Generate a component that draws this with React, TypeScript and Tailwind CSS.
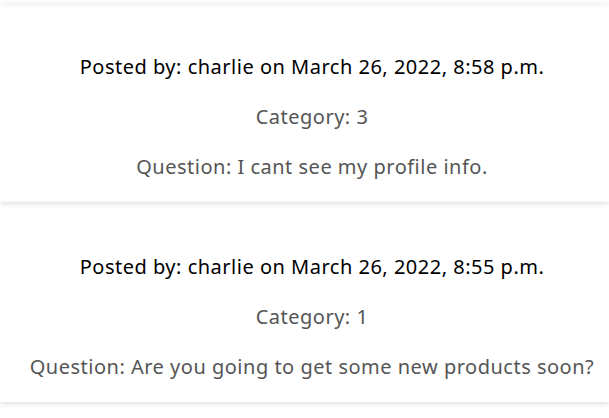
const posts = [
  {
    author: "charlie",
    date: "March 26, 2022, 8:58 p.m.",
    category: 3,
    question: "I cant see my profile info.",
  },
  {
    author: "charlie",
    date: "March 26, 2022, 8:55 p.m.",
    category: 1,
    question: "Are you going to get some new products soon?",
  },
];

export default function App() {
  return (
    <main className="min-h-screen bg-white font-['Noto_Sans',sans-serif] text-[20px] tracking-[0.5px]">
      <div className="h-[2px] shadow-[0_2px_5px_rgba(0,0,0,0.12)]" />
      {posts.map((post) => (
        <div
          key={post.date}
          className="flex h-[200px] flex-col items-center pl-[15px] pt-[50px] shadow-[0_2px_5px_rgba(0,0,0,0.12)]"
        >
          <p className="leading-[30px] text-black">
            Posted by: {post.author} on {post.date}
          </p>
          <p className="mt-[20px] leading-[30px] text-[#555]">
            Category: {post.category}
          </p>
          <p className="mt-[20px] leading-[30px] text-[#555]">
            Question: {post.question}
          </p>
        </div>
      ))}
    </main>
  );
}
